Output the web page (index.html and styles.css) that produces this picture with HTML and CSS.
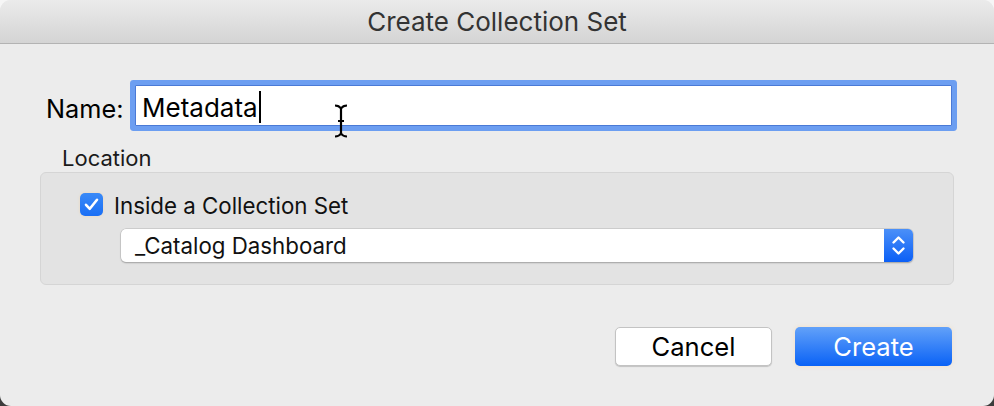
FILE: index.html
```html
<!DOCTYPE html>
<html>
<head>
<meta charset="utf-8">
<link rel="stylesheet" href="styles.css">
</head>
<body>
<div class="window">
  <div class="titlebar">Create Collection Set</div>
  <div class="content">
    <div class="name-row">
      <label class="name-label">Name:</label>
      <div class="field"><span class="field-text">Metadata</span><span class="caret"></span></div>
    </div>
    <div class="location-label">Location</div>
    <div class="group">
      <div class="check-row">
        <span class="checkbox">
          <svg width="23" height="23" viewBox="0 0 23 23"><path d="M6 11.8 L9.8 15.8 L17 6.8" fill="none" stroke="#fff" stroke-width="2.6" stroke-linecap="round" stroke-linejoin="round"/></svg>
        </span>
        <span class="check-label">Inside a Collection Set</span>
      </div>
      <div class="popup">
        <span class="popup-text">_Catalog Dashboard</span>
        <span class="popup-arrows">
          <svg width="29" height="33" viewBox="0 0 29 33"><path d="M9.5 13.5 L14.5 8.5 L19.5 13.5 M9.5 19.5 L14.5 24.5 L19.5 19.5" fill="none" stroke="#fff" stroke-width="2.4" stroke-linecap="round" stroke-linejoin="round"/></svg>
        </span>
      </div>
    </div>
    <div class="buttons">
      <button class="btn btn-cancel">Cancel</button>
      <button class="btn btn-create">Create</button>
    </div>
  </div>
  <svg class="ibeam" width="16" height="34" viewBox="0 0 16 34"><path d="M2 1.5 Q6 1.5 8 4.5 Q10 1.5 14 1.5 M8 4.5 L8 29.5 M2 32.5 Q6 32.5 8 29.5 Q10 32.5 14 32.5 M5 17 L11 17" fill="none" stroke="#000" stroke-width="2.2"/></svg>
</div>
</body>
</html>
```
FILE: styles.css
```css
html, body {
  margin: 0;
  padding: 0;
}
body {
  width: 994px;
  height: 406px;
  background: linear-gradient(#f6f6f6 50%, #3c3c3c 50%);
  font-family: Inter, "Noto Sans", sans-serif;
  color: #000;
  overflow: hidden;
}
.window {
  position: relative;
  width: 994px;
  height: 406px;
  background: #ececec;
  border-radius: 11px;
  overflow: hidden;
}
.titlebar {
  height: 43px;
  border-bottom: 1px solid #b3b3b3;
  background: linear-gradient(#ebebeb, #d4d4d4);
  text-align: center;
  font-size: 26px;
  line-height: 44px;
  color: #333;
}
.content {
  padding: 41px 40px 0 40px;
  display: flex;
  flex-direction: column;
}
.name-row {
  display: flex;
  align-items: center;
  padding-left: 6px;
  margin-right: 2px;
}
.name-label {
  font-size: 25.3px;
  width: 89px;
  flex: none;
  padding-top: 5px;
}
.field {
  flex: 1;
  height: 39px;
  background: #fff;
  border: 1px solid #4a7ad6;
  box-shadow: 0 0 0 5px #6c9ef1;
  border-radius: 1px;
  display: flex;
  align-items: center;
  padding-left: 6px;
}
.field-text {
  font-size: 26px;
  padding-top: 4px;
}
.caret {
  display: inline-block;
  width: 2px;
  height: 32px;
  background: #000;
  margin-left: 1px;
  margin-top: 3px;
}
.location-label {
  margin: 20px 0 2px 22px;
  font-size: 22px;
  line-height: 24px;
  color: #1a1a1a;
}
.group {
  height: 91px;
  border: 1px solid #d5d5d5;
  background: #e3e3e3;
  border-radius: 6px;
  padding: 20px 40px 0 39px;
  box-sizing: content-box;
  display: flex;
  flex-direction: column;
}
.check-row {
  display: flex;
  align-items: center;
  height: 23px;
}
.checkbox {
  width: 23px;
  height: 23px;
  border-radius: 5px;
  background: linear-gradient(#3a8af7, #1a6ff5);
  display: inline-flex;
  box-shadow: 0 0 3px rgba(255, 200, 120, 0.4);
}
.check-label {
  font-size: 22.3px;
  margin-left: 11px;
  color: #111;
  padding-top: 2px;
}
.popup {
  margin: 13px 0 0 41px;
  height: 33px;
  background: #fff;
  border-radius: 5px;
  box-shadow: 0 0 0 0.5px #b8b8b8, 0 1px 1.5px rgba(0, 0, 0, 0.35);
  display: flex;
  align-items: center;
  overflow: hidden;
}
.popup-text {
  flex: 1;
  font-size: 22.3px;
  padding-left: 14px;
  color: #111;
}
.popup-arrows {
  width: 29px;
  height: 33px;
  background: linear-gradient(#4b90f8, #0b5ff6);
  display: flex;
}
.buttons {
  margin-top: 42px;
  margin-right: 2px;
  display: flex;
  justify-content: flex-end;
  gap: 23px;
}
.btn {
  width: 157px;
  height: 39px;
  border-radius: 5px;
  font-family: Inter, "Noto Sans", sans-serif;
  font-size: 25.6px;
  padding: 0;
}
.btn-cancel {
  background: #fff;
  border: 1px solid #c3c3c3;
  box-shadow: 0 1px 1px rgba(0, 0, 0, 0.18);
  color: #000;
}
.btn-create {
  background: linear-gradient(#62a1f9, #0a62f6);
  border: none;
  color: #fff;
  box-shadow: 0 0 4px rgba(255, 210, 150, 0.5);
}
.ibeam {
  position: absolute;
  left: 333px;
  top: 104px;
}
```
